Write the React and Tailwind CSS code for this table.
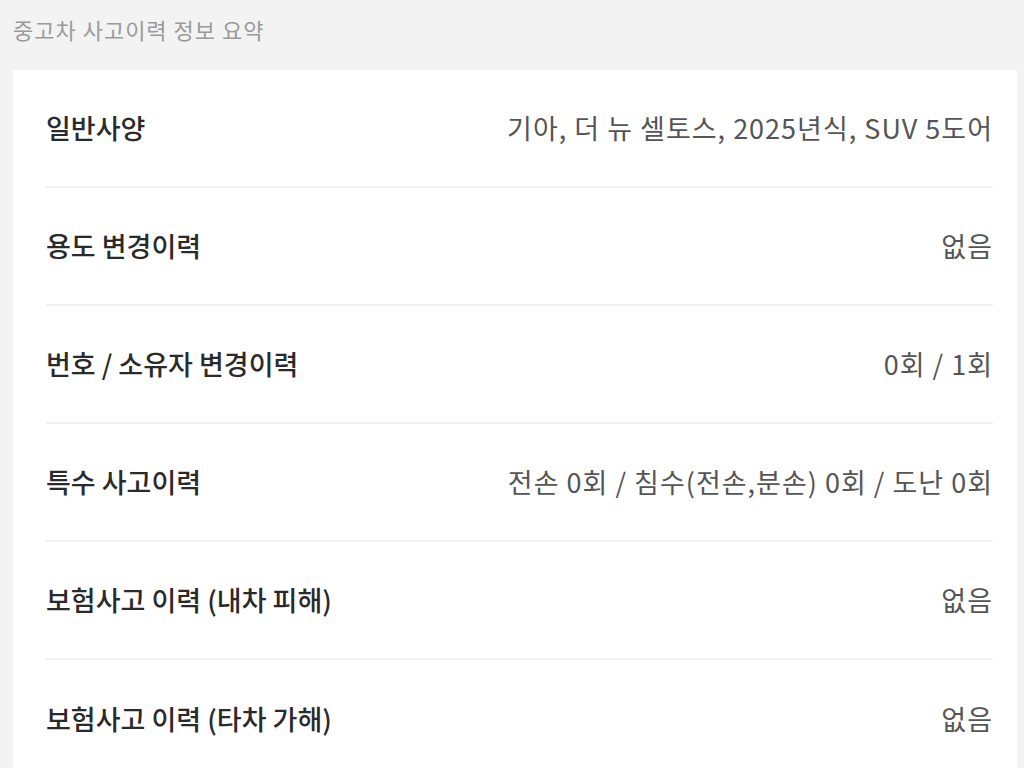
import React from 'react';

const ROWS = [
  { label: '일반사양', value: '기아, 더 뉴 셀토스, 2025년식, SUV 5도어' },
  { label: '용도 변경이력', value: '없음' },
  { label: '번호 / 소유자 변경이력', value: '0회 / 1회' },
  { label: '특수 사고이력', value: '전손 0회 / 침수(전손,분손) 0회 / 도난 0회' },
  { label: '보험사고 이력 (내차 피해)', value: '없음' },
  { label: '보험사고 이력 (타차 가해)', value: '없음' },
];

export default function App() {
  return (
    <div
      className="min-h-screen bg-[#f3f3f3] pl-[13px] pr-[7px] overflow-hidden"
      style={{ fontFamily: '"Noto Sans CJK KR", "Noto Sans", sans-serif' }}
    >
      <h1 className="h-[70px] pt-[13px] text-[22px] leading-[32px] text-[#9a9a9a] tracking-[1px]">
        중고차 사고이력 정보 요약
      </h1>

      <div className="bg-white pl-[33px] pr-[24px]">
        {ROWS.map((row, i) => (
          <div
            key={row.label}
            className={`flex items-center justify-between h-[118px] ${i < ROWS.length - 1 ? 'border-b-2 border-[#f1f1f1]' : ''}`}
          >
            <span className="text-[27px] font-medium text-[#2a2a2a]">{row.label}</span>
            <span className="text-[27px] text-[#555] tracking-[1px]">{row.value}</span>
          </div>
        ))}
      </div>
    </div>
  );
}
